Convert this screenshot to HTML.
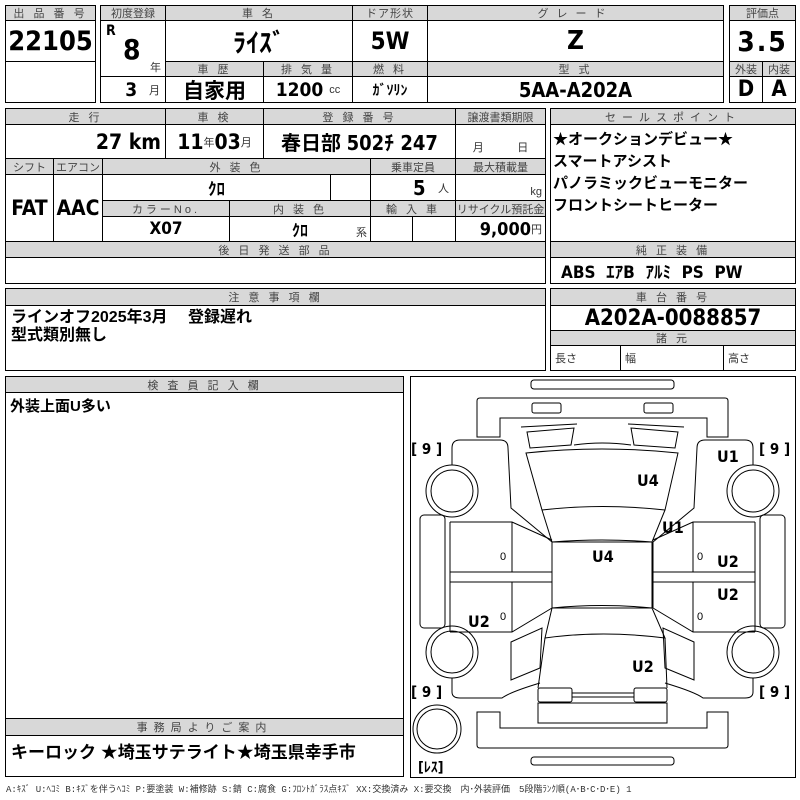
<!DOCTYPE html>
<html><head><meta charset="utf-8"><style>
body{margin:0;width:800px;height:800px;background:#fff;position:relative;overflow:hidden;font-family:"Liberation Sans","Noto Sans CJK JP",sans-serif;color:#000}
.c{position:absolute;border:1px solid #000;box-sizing:border-box;display:flex;align-items:center;justify-content:center;white-space:nowrap;overflow:hidden}
.h{background:#d8d8d8;color:#444;font-size:11px;letter-spacing:3px}
.b{font-family:"Liberation Sans Narrow","DejaVu Sans Condensed","Liberation Sans","Noto Sans CJK JP",sans-serif;font-weight:bold}
.j{font-family:"Liberation Sans","Noto Sans CJK JP",sans-serif;font-weight:bold}
.s{font-size:11px;font-weight:normal;font-family:"Liberation Sans","Noto Sans CJK JP",sans-serif;color:#333}
</style></head><body>
<div class="c h" style="left:5px;top:5px;width:91px;height:16px">出 品 番 号</div>
<div class="c b" style="left:5px;top:20px;width:91px;height:42px;font-size:27px">22105</div>
<div class="c" style="left:5px;top:61px;width:91px;height:42px"></div>
<div class="c h" style="left:100px;top:5px;width:66px;height:16px;letter-spacing:0">初度登録</div>
<div class="c h" style="left:165px;top:5px;width:188px;height:16px">車 名</div>
<div class="c h" style="left:352px;top:5px;width:76px;height:16px;letter-spacing:1px">ドア形状</div>
<div class="c h" style="left:427px;top:5px;width:297px;height:16px;letter-spacing:8px">グレード</div>
<div class="c" style="left:100px;top:20px;width:66px;height:57px"><span class="b" style="position:absolute;left:5px;top:2px;font-size:14px">R</span><span class="b" style="position:absolute;left:22px;top:12px;font-size:28px">8</span><span class="s" style="position:absolute;right:4px;bottom:1px">年</span></div>
<div class="c j" style="left:165px;top:20px;width:188px;height:42px;font-size:26px">ﾗｲｽﾞ</div>
<div class="c b" style="left:352px;top:20px;width:76px;height:42px;font-size:24px">5W</div>
<div class="c b" style="left:427px;top:20px;width:297px;height:42px;font-size:26px">Z</div>
<div class="c h" style="left:165px;top:61px;width:99px;height:16px">車 歴</div>
<div class="c h" style="left:263px;top:61px;width:90px;height:16px">排 気 量</div>
<div class="c h" style="left:352px;top:61px;width:76px;height:16px">燃 料</div>
<div class="c h" style="left:427px;top:61px;width:297px;height:16px">型 式</div>
<div class="c b" style="left:100px;top:76px;width:66px;height:27px;font-size:19px;justify-content:flex-end;padding-right:5px">3&nbsp;&nbsp;<span class="s">月</span></div>
<div class="c j" style="left:165px;top:76px;width:99px;height:27px;font-size:21px">自家用</div>
<div class="c b" style="left:263px;top:76px;width:90px;height:27px;font-size:19px">1200&nbsp;<span class="s">cc</span></div>
<div class="c j" style="left:352px;top:76px;width:76px;height:27px;font-size:14px">ｶﾞｿﾘﾝ</div>
<div class="c b" style="left:427px;top:76px;width:297px;height:27px;font-size:20px">5AA-A202A</div>
<div class="c h" style="left:729px;top:5px;width:67px;height:16px;letter-spacing:0">評価点</div>
<div class="c b" style="left:729px;top:20px;width:67px;height:42px;font-size:28px;letter-spacing:2px">3.5</div>
<div class="c h" style="left:729px;top:61px;width:34px;height:16px;letter-spacing:0">外装</div>
<div class="c h" style="left:762px;top:61px;width:34px;height:16px;letter-spacing:0">内装</div>
<div class="c b" style="left:729px;top:76px;width:34px;height:27px;font-size:22px">D</div>
<div class="c b" style="left:762px;top:76px;width:34px;height:27px;font-size:22px">A</div>
<div class="c h" style="left:5px;top:108px;width:161px;height:17px">走 行</div>
<div class="c h" style="left:165px;top:108px;width:99px;height:17px">車 検</div>
<div class="c h" style="left:263px;top:108px;width:193px;height:17px">登 録 番 号</div>
<div class="c h" style="left:455px;top:108px;width:91px;height:17px;letter-spacing:0">譲渡書類期限</div>
<div class="c b" style="left:5px;top:124px;width:161px;height:35px;font-size:21px;justify-content:flex-end;padding-right:4px">27 km</div>
<div class="c b" style="left:165px;top:124px;width:99px;height:35px;font-size:21px">11<span class="s">年</span>03<span class="s">月</span></div>
<div class="c j" style="left:263px;top:124px;width:193px;height:35px;font-size:20px">春日部&nbsp;<span class="b">502ﾁ 247</span></div>
<div class="c s" style="left:455px;top:124px;width:91px;height:35px;align-items:flex-end;padding-bottom:3px;justify-content:space-around;border-color:#000">月 <span>日</span></div>
<div class="c h" style="left:5px;top:158px;width:49px;height:17px;letter-spacing:0">シフト</div>
<div class="c h" style="left:53px;top:158px;width:50px;height:17px;letter-spacing:0">エアコン</div>
<div class="c h" style="left:102px;top:158px;width:269px;height:17px">外 装 色</div>
<div class="c h" style="left:370px;top:158px;width:86px;height:17px;letter-spacing:0">乗車定員</div>
<div class="c h" style="left:455px;top:158px;width:91px;height:17px;letter-spacing:0">最大積載量</div>
<div class="c b" style="left:5px;top:174px;width:49px;height:68px;font-size:21px">FAT</div>
<div class="c b" style="left:53px;top:174px;width:50px;height:68px;font-size:21px">AAC</div>
<div class="c j" style="left:102px;top:174px;width:229px;height:27px;font-size:17px">ｸﾛ</div>
<div class="c" style="left:330px;top:174px;width:41px;height:27px"></div>
<div class="c b" style="left:370px;top:174px;width:86px;height:27px;font-size:20px;justify-content:flex-end;padding-right:6px">5&nbsp;&nbsp;<span class="s">人</span></div>
<div class="c s" style="left:455px;top:174px;width:91px;height:27px;justify-content:flex-end;align-items:flex-end;padding:0 3px 2px 0;border-color:#000">kg</div>
<div class="c h" style="left:102px;top:200px;width:128px;height:17px">カラーNo.</div>
<div class="c h" style="left:229px;top:200px;width:142px;height:17px">内 装 色</div>
<div class="c h" style="left:370px;top:200px;width:86px;height:17px">輸 入 車</div>
<div class="c h" style="left:455px;top:200px;width:91px;height:17px;letter-spacing:0">リサイクル預託金</div>
<div class="c b" style="left:102px;top:216px;width:128px;height:26px;font-size:17px">X07</div>
<div class="c j" style="left:229px;top:216px;width:142px;height:26px;font-size:16px">ｸﾛ<span class="s" style="position:absolute;right:3px;bottom:1px">系</span></div>
<div class="c" style="left:370px;top:216px;width:43px;height:26px"></div>
<div class="c" style="left:412px;top:216px;width:44px;height:26px"></div>
<div class="c b" style="left:455px;top:216px;width:91px;height:26px;font-size:18px;justify-content:flex-end;padding-right:3px">9,000<span class="s">円</span></div>
<div class="c h" style="left:5px;top:241px;width:541px;height:17px">後 日 発 送 部 品</div>
<div class="c" style="left:5px;top:257px;width:541px;height:27px"></div>
<div class="c h" style="left:550px;top:108px;width:246px;height:17px;letter-spacing:6px">セールスポイント</div>
<div class="c j" style="left:550px;top:124px;width:246px;height:118px;font-size:15px;display:block;line-height:22px;padding:4px 0 0 2px">★オークションデビュー★<br>スマートアシスト<br>パノラミックビューモニター<br>フロントシートヒーター</div>
<div class="c h" style="left:550px;top:241px;width:246px;height:17px">純 正 装 備</div>
<div class="c b" style="left:550px;top:257px;width:246px;height:27px;font-size:17px;justify-content:flex-start;padding-left:10px">ABS&nbsp;&nbsp;ｴｱB&nbsp;&nbsp;ｱﾙﾐ&nbsp;&nbsp;PS&nbsp;&nbsp;PW</div>
<div class="c h" style="left:5px;top:288px;width:541px;height:18px">注 意 事 項 欄</div>
<div class="c j" style="left:5px;top:305px;width:541px;height:66px;font-size:16px;display:block;line-height:18px;padding:3px 0 0 5px">ラインオフ2025年3月　 登録遅れ<br>型式類別無し</div>
<div class="c h" style="left:550px;top:288px;width:246px;height:18px">車 台 番 号</div>
<div class="c b" style="left:550px;top:305px;width:246px;height:26px;font-size:22px">A202A-0088857</div>
<div class="c h" style="left:550px;top:330px;width:246px;height:16px">諸 元</div>
<div class="c s" style="left:550px;top:345px;width:71px;height:26px;justify-content:flex-start;padding-left:4px;border-color:#000">長さ</div>
<div class="c s" style="left:620px;top:345px;width:104px;height:26px;justify-content:flex-start;padding-left:4px;border-color:#000">幅</div>
<div class="c s" style="left:723px;top:345px;width:73px;height:26px;justify-content:flex-start;padding-left:4px;border-color:#000">高さ</div>
<div class="c h" style="left:5px;top:376px;width:399px;height:17px">検 査 員 記 入 欄</div>
<div class="c j" style="left:5px;top:392px;width:399px;height:327px;font-size:15px;display:block;padding:2px 0 0 4px">外装上面U多い</div>
<div class="c h" style="left:5px;top:718px;width:399px;height:18px;letter-spacing:6px">事務局よりご案内</div>
<div class="c j" style="left:5px;top:735px;width:399px;height:42px;font-size:17px;justify-content:flex-start;align-items:flex-start;padding:2px 0 0 5px">キーロック ★埼玉サテライト★埼玉県幸手市</div>
<div class="c" style="left:410px;top:376px;width:386px;height:402px"></div>
<svg style="position:absolute;left:0;top:0" width="800" height="800" fill="none" stroke="#000" stroke-width="1">
<rect x="531" y="380" width="143" height="9" rx="3"/>
<path d="M477,437 L477,401 Q477,398 480,398 L725,398 Q728,398 728,401 L728,437 L707,437 L707,418 L500,418 L500,437 Z"/>
<rect x="532" y="403" width="29" height="10" rx="2"/><rect x="644" y="403" width="29" height="10" rx="2"/>
<path d="M521,427 L577,424 M527,432 L574,428 L571,445 L530,448 Z"/>
<path d="M684,427 L628,424 M678,432 L631,428 L634,445 L675,448 Z"/>
<path d="M574,445 Q602,441 631,445"/>
<path d="M526,453 Q602,445 678,453 L665,510 Q602,503 542,510 Z"/>
<path d="M542,510 L552,542 Q602,538 652,542 L665,510"/>
<rect x="552" y="542" width="100" height="66"/>
<path d="M552,608 Q602,603 652,608 L665,638 Q602,630 545,638 Z"/>
<path d="M545,638 L538,688 M665,638 L667,688"/>
<rect x="538" y="688" width="34" height="14" rx="2"/><rect x="634" y="688" width="33" height="14" rx="2"/>
<path d="M572,693 L634,693 M572,697 L634,697"/>
<rect x="538" y="703" width="129" height="20"/>
<path d="M477,712 L477,745 Q477,748 480,748 L725,748 Q728,748 728,745 L728,712 L707,712 L707,728 L500,728 L500,712 Z"/>
<rect x="531" y="757" width="143" height="8" rx="3"/>
<circle cx="437" cy="729" r="24"/><circle cx="437" cy="729" r="20"/>
<g id="side">
<path d="M452,465 L452,448 Q452,440 460,440 L500,440 Q508,440 508,448 L511,508 L552,542"/>
<circle cx="452" cy="491" r="26"/><circle cx="452" cy="491" r="21"/>
<rect x="420" y="515" width="25" height="113" rx="4"/>
<path d="M450,522 L512,522 L552,540 M512,522 L512,572"/>
<path d="M450,572 L552,572 M450,582 L552,582 M450,522 L450,632"/>
<path d="M450,632 L512,632 L552,608 M512,582 L512,632"/>
<circle cx="452" cy="652" r="26"/><circle cx="452" cy="652" r="21"/>
<path d="M511,642 L542,628 L540,668 L511,680 Z"/>
<path d="M452,678 L452,692 Q452,698 460,698 L502,698 Q510,692 540,683"/>
<path d="M552,542 L552,608"/>
</g>
<use href="#side" transform="translate(1205,0) scale(-1,1)"/>
</svg>
<div class="b" style="position:absolute;font-size:16px;left:717px;top:447px">U1</div>
<div class="b" style="position:absolute;font-size:16px;left:637px;top:471px">U4</div>
<div class="b" style="position:absolute;font-size:16px;left:662px;top:518px">U1</div>
<div class="b" style="position:absolute;font-size:16px;left:592px;top:547px">U4</div>
<div class="b" style="position:absolute;font-size:16px;left:717px;top:552px">U2</div>
<div class="b" style="position:absolute;font-size:16px;left:717px;top:585px">U2</div>
<div class="b" style="position:absolute;font-size:16px;left:468px;top:612px">U2</div>
<div class="b" style="position:absolute;font-size:16px;left:632px;top:657px">U2</div>
<div style="position:absolute;font-size:11px;left:500px;top:551px">0</div>
<div style="position:absolute;font-size:11px;left:697px;top:551px">0</div>
<div style="position:absolute;font-size:11px;left:500px;top:611px">0</div>
<div style="position:absolute;font-size:11px;left:697px;top:611px">0</div>
<div class="b" style="position:absolute;font-size:15px;left:411px;top:440px">[&nbsp;9&nbsp;]</div>
<div class="b" style="position:absolute;font-size:15px;left:759px;top:440px">[&nbsp;9&nbsp;]</div>
<div class="b" style="position:absolute;font-size:15px;left:411px;top:683px">[&nbsp;9&nbsp;]</div>
<div class="b" style="position:absolute;font-size:15px;left:759px;top:683px">[&nbsp;9&nbsp;]</div>
<div class="b" style="position:absolute;font-size:14px;left:418px;top:757px">[ﾚｽ]</div>
<div style="position:absolute;left:6px;top:782px;font-size:9px;color:#333;white-space:nowrap;font-family:'Liberation Mono','Noto Sans CJK JP',monospace">A:ｷｽﾞ U:ﾍｺﾐ B:ｷｽﾞを伴うﾍｺﾐ P:要塗装 W:補修跡 S:錆 C:腐食 G:ﾌﾛﾝﾄｶﾞﾗｽ点ｷｽﾞ XX:交換済み X:要交換　内･外装評価　5段階ﾗﾝｸ順(A･B･C･D･E) 1</div>
</body></html>
